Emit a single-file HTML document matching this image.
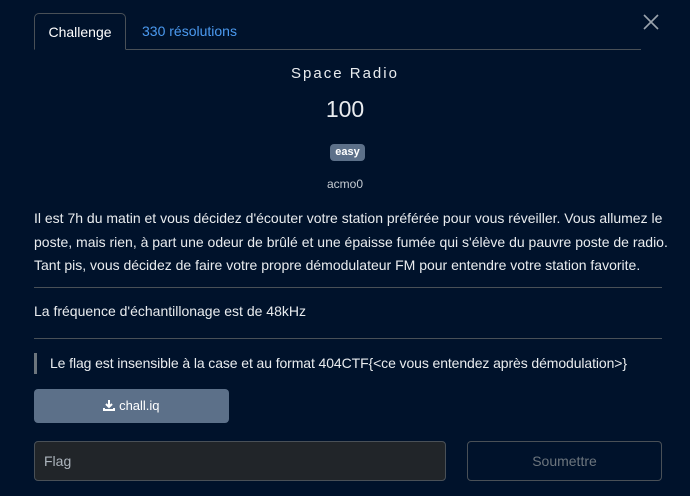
<!DOCTYPE html>
<html><head><meta charset="utf-8"><style>
body{margin:0;width:690px;height:496px;background:#00122b;color:#e9ecef;font-family:"Liberation Sans",sans-serif;font-size:14px;overflow:hidden;position:relative}
.a{position:absolute}
.tabs{left:34px;top:13px;width:607px;height:36px;border-bottom:1px solid #495057}
.tab1{left:0;top:0;width:92px;height:37px;border:1px solid #495057;border-bottom:1px solid #00122b;border-radius:5px 5px 0 0;box-sizing:border-box;text-align:center;line-height:36px;font-size:14px;color:#fff;background:#00122b}
.tab2{left:108px;top:0;line-height:37px;color:#4b9af0}
.c{left:0;width:690px;text-align:center}
p{margin:0}
.hr{left:34px;width:628px;height:1px;background:#495057}
</style></head><body>
<div class="a tabs"><div class="a tab1">Challenge</div><div class="a tab2">330 résolutions</div></div>
<svg class="a" style="left:643px;top:14px" width="16" height="16" viewBox="0 0 16 16"><path d="M1 1L15 15M15 1L1 15" stroke="#9aa3ad" stroke-width="1.6"/></svg>
<div class="a c" style="top:65px;font-size:15px;letter-spacing:2px">Space Radio</div>
<div class="a c" style="top:96px;font-size:23px">100</div>
<div class="a" style="left:330px;top:144px;width:35px;height:17px;background:#5c7089;border-radius:4px;font-size:11px;font-weight:bold;text-align:center;line-height:17px;color:#fff">easy</div>
<div class="a c" style="top:177px;font-size:12px;color:#c5cbd2">acmo0</div>
<div class="a" style="left:34px;top:207px;width:650px;line-height:23.5px;font-size:14px;letter-spacing:0px;white-space:nowrap">Il est 7h du matin et vous décidez d'écouter votre station préférée pour vous réveiller. Vous allumez le<br>poste, mais rien, à part une odeur de brûlé et une épaisse fumée qui s'élève du pauvre poste de radio.<br>Tant pis, vous décidez de faire votre propre démodulateur FM pour entendre votre station favorite.</div>
<div class="a hr" style="top:287px"></div>
<div class="a" style="left:34px;top:303px;font-size:14px">La fréquence d'échantillonage est de 48kHz</div>
<div class="a hr" style="top:338px"></div>
<div class="a" style="left:34px;top:353px;width:3px;height:21px;background:#6c757d"></div>
<div class="a" style="left:50px;top:355px;font-size:14px;letter-spacing:-0.1px;white-space:nowrap">Le flag est insensible à la case et au format 404CTF{&lt;ce vous entendez après démodulation&gt;}</div>
<div class="a" style="left:34px;top:389px;width:195px;height:34px;background:#5c7089;border-radius:4px;text-align:center;line-height:34px;font-size:13px;color:#fff"><svg width="12" height="12" viewBox="0 0 12 12" style="vertical-align:-1px"><path d="M6 1v7M3 5l3 3 3-3" stroke="#fff" stroke-width="2" fill="none"/><path d="M1 9v2h10V9" stroke="#fff" stroke-width="2" fill="none"/></svg> chall.iq</div>
<div class="a" style="left:34px;top:441px;width:412px;height:40px;background:#212529;border:1px solid #495057;border-radius:4px;box-sizing:border-box;line-height:38px;padding-left:9px;color:#adb5bd;font-size:14px">Flag</div>
<div class="a" style="left:467px;top:441px;width:195px;height:40px;border:1px solid #495057;border-radius:4px;box-sizing:border-box;text-align:center;line-height:38px;color:#6c757d;font-size:14px">Soumettre</div>
</body></html>
